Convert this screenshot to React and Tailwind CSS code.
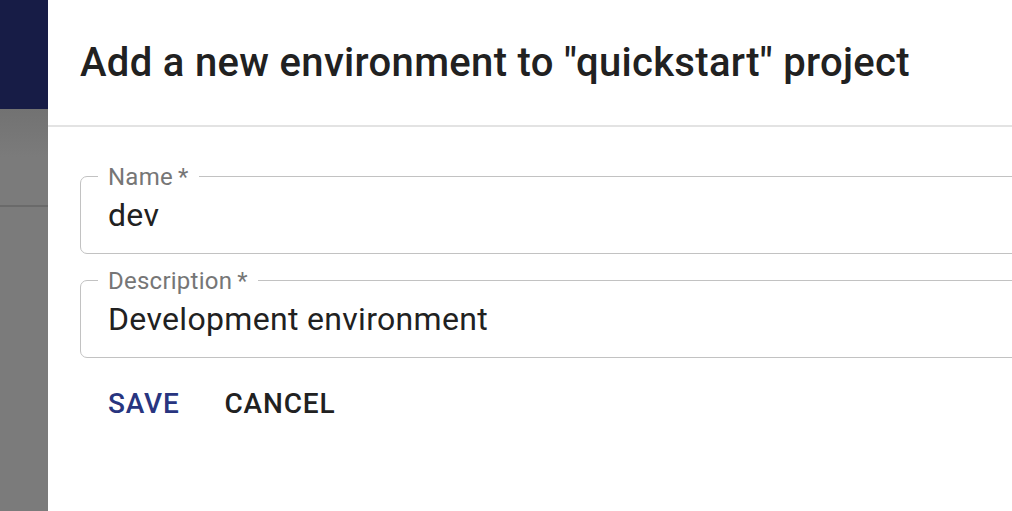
import React from 'react';

const Field = ({ label, value }) => (
    <div className="relative h-[78px] w-[1100px] rounded-[7px] border border-[#c2c2c2] flex items-center pl-[27px]">
        <span className="absolute left-[17px] top-0 -translate-y-1/2 bg-white px-[10px] text-[24px] leading-[28px] tracking-[0.01em] text-[#767676]">
            {label}&thinsp;*
        </span>
        <span className="text-[32px] leading-[38px] tracking-[0.01em] text-[#212121]">{value}</span>
    </div>
);

const App = () => {
    return (
        <div className="flex h-[511px] w-[1012px] overflow-hidden font-['Roboto','Liberation_Sans',sans-serif]">
            {/* page behind the backdrop */}
            <div className="w-[48px] shrink-0 flex flex-col">
                <div className="h-[109px] bg-[#171c46]" />
                <div className="h-[96px] bg-gradient-to-b from-[#727272] to-[#7b7b7b] via-[#7b7b7b]" />
                <div className="h-[2px] bg-[#6a6a6a]" />
                <div className="flex-1 bg-[#7b7b7b]" />
            </div>

            {/* drawer */}
            <div className="flex-1 min-w-0 bg-white overflow-hidden">
                <div className="h-[125px] flex items-center px-[32px]">
                    <h2 className="text-[40px] font-medium text-[#212121] whitespace-nowrap tracking-[0.008em]">
                        Add a new environment to "quickstart" project
                    </h2>
                </div>
                <div className="h-[2px] bg-[#e3e3e3]" />

                <div className="pl-[32px] pt-[49px] flex flex-col gap-[26px]">
                    <Field label="Name" value="dev" />
                    <Field label="Description" value="Development environment" />
                </div>

                <div className="pl-[44px] pt-[24px] flex gap-[13px]">
                    <button className="px-[16px] h-[44px] text-[28px] font-medium tracking-[0.029em] text-[#28357f]">SAVE</button>
                    <button className="px-[16px] h-[44px] text-[28px] font-medium tracking-[0.029em] text-[#212121]">CANCEL</button>
                </div>
            </div>
        </div>
    );
};

export default App;
